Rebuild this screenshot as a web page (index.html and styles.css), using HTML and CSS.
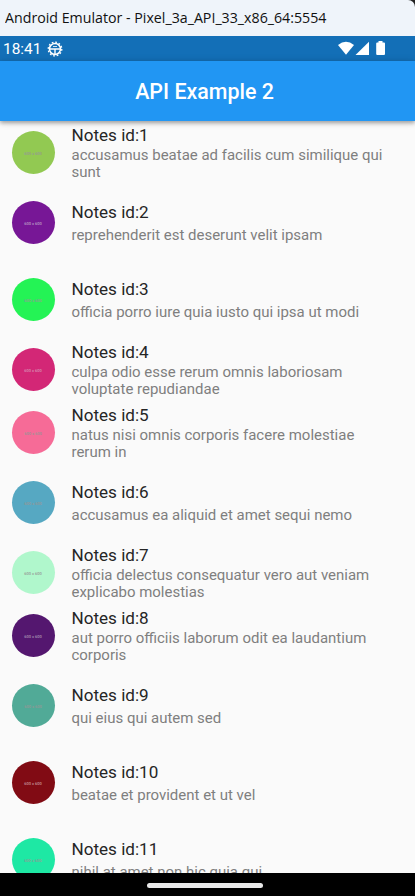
FILE: index.html
```
<!DOCTYPE html>
<html lang="en">
<head>
<meta charset="utf-8">
<title>API Example 2</title>
<link rel="stylesheet" href="styles.css">
</head>
<body>
<div class="window">
  <div class="titlebar"><span>Android Emulator - Pixel_3a_API_33_x86_64:5554</span></div>
  <div class="statusbar">
    <span class="clock">18:41</span>
    <svg class="gear" viewBox="0 0 16 16" width="16" height="16" fill="none" stroke="#fff">
      <circle cx="8" cy="8" r="5.5" stroke-width="1.5"/>
      <circle cx="8" cy="8" r="6.8" stroke-width="1.3" stroke-dasharray="1.8 1.76"/>
      <path d="M3 8H13M8 8V13" stroke-width="1.4"/>
      <path d="M6 5.5H10" stroke-width=".8"/>
    </svg>
    <svg class="signals" viewBox="0 0 48 15" width="48" height="15" fill="#fff">
      <path d="M0 4Q8-2.4 16 4L8 13.8Z"/>
      <path d="M17.5 14L31 .7V14Z"/>
      <path d="M40.5 0H44.5V1.5H46Q47 1.5 47 2.5V13Q47 14 46 14H39.2Q38.2 14 38.2 13V2.5Q38.2 1.5 39.2 1.5H40.5Z"/>
    </svg>
  </div>
  <header class="appbar"><h1>API Example 2</h1></header>
  <main class="list">
    <div class="row two"><div class="avatar c1">600 x 600</div><div class="text"><h2>Notes id:1</h2><p>accusamus beatae ad facilis cum similique qui<br>sunt</p></div></div>
    <div class="row"><div class="avatar c2">600 x 600</div><div class="text"><h2>Notes id:2</h2><p>reprehenderit est deserunt velit ipsam</p></div></div>
    <div class="row"><div class="avatar c3">600 x 600</div><div class="text"><h2>Notes id:3</h2><p>officia porro iure quia iusto qui ipsa ut modi</p></div></div>
    <div class="row two"><div class="avatar c4">600 x 600</div><div class="text"><h2>Notes id:4</h2><p>culpa odio esse rerum omnis laboriosam<br>voluptate repudiandae</p></div></div>
    <div class="row two"><div class="avatar c5">600 x 600</div><div class="text"><h2>Notes id:5</h2><p>natus nisi omnis corporis facere molestiae<br>rerum in</p></div></div>
    <div class="row"><div class="avatar c6">600 x 600</div><div class="text"><h2>Notes id:6</h2><p>accusamus ea aliquid et amet sequi nemo</p></div></div>
    <div class="row two"><div class="avatar c7">600 x 600</div><div class="text"><h2>Notes id:7</h2><p>officia delectus consequatur vero aut veniam<br>explicabo molestias</p></div></div>
    <div class="row two"><div class="avatar c8">600 x 600</div><div class="text"><h2>Notes id:8</h2><p>aut porro officiis laborum odit ea laudantium<br>corporis</p></div></div>
    <div class="row"><div class="avatar c9">600 x 600</div><div class="text"><h2>Notes id:9</h2><p>qui eius qui autem sed</p></div></div>
    <div class="row"><div class="avatar c10">600 x 600</div><div class="text"><h2>Notes id:10</h2><p>beatae et provident et ut vel</p></div></div>
    <div class="row"><div class="avatar c11">600 x 600</div><div class="text"><h2>Notes id:11</h2><p>nihil at amet non hic quia qui</p></div></div>
  </main>
  <footer class="navbar"><div class="handle"></div></footer>
</div>
</body>
</html>
```
FILE: styles.css
```
* { box-sizing: border-box; }
body { margin: 0; background: #222; font-family: Roboto, sans-serif; }
h1, h2, p { margin: 0; font-weight: 400; }
.window { width: 415px; height: 896px; overflow: hidden; display: flex; flex-direction: column; }
.titlebar {
  flex: none; height: 36px; padding-left: 5px; background: #eff4fa;
  border-top-right-radius: 7px; color: #111;
  font: 15px/35px "Open Sans", sans-serif; white-space: nowrap;
}
.titlebar span { display: inline-block; transform-origin: 0 50%; transform: scaleX(.947); }
.statusbar { flex: none; height: 25px; background: #136fb7; display: flex; align-items: center; padding: 0 29px 0 3px; color: #fff; }
.clock { font-size: 15.4px; line-height: 25px; width: 44px; padding-top: 1px; }
.signals { margin-left: auto; }
.appbar {
  flex: none; height: 60px; background: #2196f3; color: #fff; z-index: 1; position: relative;
  display: flex; align-items: center; justify-content: center; padding: 2px 6px 0 0;
  box-shadow: 0 2px 4px rgba(0,0,0,.3), 0 1px 8px rgba(0,0,0,.14);
}
.appbar h1 { font-size: 21.4px; font-weight: 500; line-height: 26px; }
.list { flex: 1; min-height: 0; overflow: hidden; background: #fafafa; }
.row { height: 77px; display: flex; align-items: center; padding-left: 11.5px; gap: 17px; }
.row.two { height: 63px; }
.avatar {
  flex: none; width: 43px; height: 43px; border-radius: 50%;
  display: flex; align-items: center; justify-content: center; padding-top: 1px;
  font-size: 4px; font-weight: 500; line-height: 5px; color: #969696; white-space: nowrap;
}
.text { white-space: nowrap; align-self: flex-start; padding-top: 18px; }
.two .text { padding-top: 4px; }
.text h2 { font-size: 17.1px; line-height: 20px; color: #252525; }
.text p { font-size: 14.97px; line-height: 17px; color: #7f7f7f; padding-top: 5px; }
.two .text p { padding-top: 2px; }
.c1 { background: #92c952; }
.c2 { background: #771796; color: #bba0c5; }
.c3 { background: #24f355; }
.c4 { background: #d32776; color: #d695b5; }
.c5 { background: #f66b97; }
.c6 { background: #56a8c2; }
.c7 { background: #b0f7cc; }
.c8 { background: #54176f; color: #aa98b3; }
.c9 { background: #51aa97; }
.c10 { background: #810b14; color: #c5999c; }
.c11 { background: #1ee8a4; }
.navbar { flex: none; height: 23px; background: #000; display: flex; justify-content: center; padding: 10px 6px 0 0; }
.handle { width: 116px; height: 5px; border-radius: 3px; background: #e8e8e8; }
```
